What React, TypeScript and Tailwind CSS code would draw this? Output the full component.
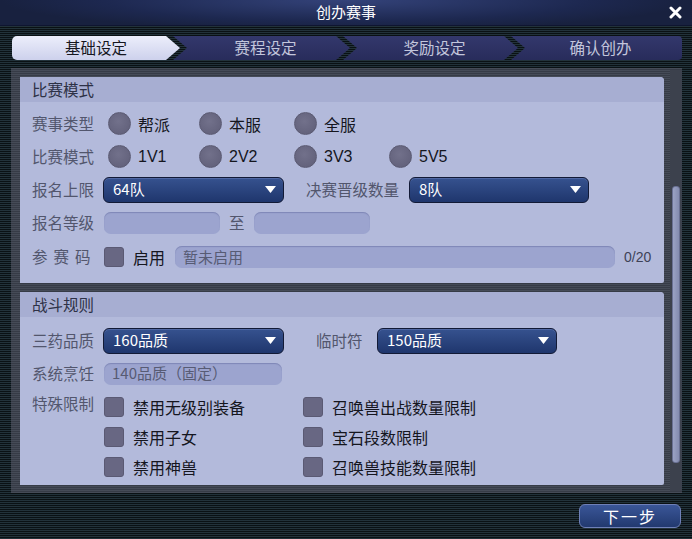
import React from "react";

const stripes =
  "bg-[image:repeating-linear-gradient(180deg,#22323a_0px,#22323a_1px,#0a1114_1px,#0a1114_2px)]";

function Tri() {
  return (
    <svg width="11" height="7" viewBox="0 0 11 7">
      <path d="M0 0h11L5.5 7z" fill="#ffffff" />
    </svg>
  );
}

function Select({ value, w }: { value: string; w: string }) {
  return (
    <div
      className={`${w} flex h-[26px] items-center justify-between rounded-[6px] border border-[#121a36] bg-[linear-gradient(180deg,#36528f,#1f366d)] pl-[9px] pr-[7px] text-[15px] text-white shadow-[inset_0_1px_0_#5068a4]`}
    >
      <span>{value}</span>
      <Tri />
    </div>
  );
}

function Field({ w, text }: { w: string; text?: string }) {
  return (
    <div
      className={`${w} flex h-[22px] items-center rounded-[7px] bg-[#9ca4cf] pl-[8px] text-[15px] text-[#575b74] shadow-[inset_0_1px_1px_#7f87b6]`}
    >
      {text}
    </div>
  );
}

function Radio({ label, w }: { label: string; w: string }) {
  return (
    <div className={`${w} flex items-center gap-[7px]`}>
      <div className="h-[23px] w-[23px] rounded-full border border-[#5b5a72] bg-[radial-gradient(circle_at_45%_40%,#72718b,#5e5d77)]" />
      <span className="text-[16px] leading-[20px] text-[#15161e]">{label}</span>
    </div>
  );
}

function Check({ label }: { label?: string }) {
  return (
    <div className="flex h-[20px] items-center gap-[9px]">
      <div className="h-[20px] w-[20px] rounded-[3px] border border-[#5a5973] bg-[#686783]" />
      {label && <span className="text-[16px] leading-[20px] text-[#15161e]">{label}</span>}
    </div>
  );
}

function Label({ children }: { children: React.ReactNode }) {
  return <div className="w-[71px] shrink-0 text-[15.5px] text-[#52566d]">{children}</div>;
}

function Section({ title, children }: { title: string; children: React.ReactNode }) {
  return (
    <div className="overflow-hidden rounded-tr-[4px] rounded-br-[2px] bg-[#b3badb]">
      <div className="flex h-[25px] items-center bg-[#a7aed2] pl-[12px] text-[15.5px] text-[#2d3146]">
        {title}
      </div>
      <div className="pl-[12px]">{children}</div>
    </div>
  );
}

const tabs = ["基础设定", "赛程设定", "奖励设定", "确认创办"];

export default function App() {
  return (
    <div
      className={`flex h-[539px] w-[692px] flex-col overflow-hidden font-['Noto_Sans_CJK_SC',sans-serif] ${stripes}`}
    >
      {/* title bar */}
      <div className="grid h-[26px] shrink-0 grid-cols-[1fr_auto_1fr] items-center border-b border-[#0f1530] bg-[radial-gradient(ellipse_50%_120%_at_50%_0%,#34437a,#1d2850_70%,#18213f)]">
        <div />
        <div className="text-[15px] text-white">创办赛事</div>
        <div className="flex justify-end pr-[10px]">
          <svg width="13" height="13" viewBox="0 0 13 13">
            <path d="M2 2l9 9M11 2l-9 9" stroke="#ffffff" strokeWidth="3" strokeLinecap="round" />
          </svg>
        </div>
      </div>

      {/* tabs */}
      <div className="mt-[10px] flex h-[24px] shrink-0 pl-[12px]">
        {tabs.map((t, i) => {
          const active = i === 0;
          const w = ["w-[168px]", "w-[177px]", "w-[175px]", "w-[171px]"][i];
          const clip =
            i === 0
              ? "[clip-path:polygon(0_0,calc(100%-14px)_0,100%_50%,calc(100%-14px)_100%,0_100%)]"
              : i === 3
                ? "[clip-path:polygon(0_0,100%_0,100%_100%,0_100%,14px_50%)]"
                : "[clip-path:polygon(0_0,calc(100%-14px)_0,100%_50%,calc(100%-14px)_100%,0_100%,14px_50%)]";
          return (
            <div
              key={t}
              className={`${w} ${clip} ${i > 0 ? "-ml-[7px]" : "rounded-l-[5px]"} ${
                i === 3 ? "rounded-r-[4px]" : ""
              } flex h-full items-center justify-center text-[15.5px] ${
                active
                  ? "bg-[linear-gradient(180deg,#eceefb,#cdd1ec)] text-[#16171f]"
                  : "bg-[linear-gradient(180deg,#33386c,#282c5b)] pl-[8px] text-[#c3c6dc]"
              }`}
            >
              {t}
            </div>
          );
        })}
      </div>

      {/* main frame */}
      <div className="ml-[11px] mt-[8px] flex h-[425px] w-[671px] shrink-0 bg-[image:repeating-linear-gradient(180deg,#454b57_0px,#454b57_1px,#363b46_1px,#363b46_2px)]">
        <div className="ml-[9px] flex w-[644px] flex-col gap-[9px] pt-[9px]">
          <Section title="比赛模式">
            <div className="flex flex-col pb-[8px] pt-[5px]">
              <div className="flex h-[33px] items-center">
                <Label>赛事类型</Label>
                <div className="ml-[5px] flex">
                  <Radio label="帮派" w="w-[91px]" />
                  <Radio label="本服" w="w-[95px]" />
                  <Radio label="全服" w="w-[95px]" />
                </div>
              </div>
              <div className="flex h-[33px] items-center">
                <Label>比赛模式</Label>
                <div className="ml-[5px] flex font-['Liberation_Sans',sans-serif]">
                  <Radio label="1V1" w="w-[91px]" />
                  <Radio label="2V2" w="w-[95px]" />
                  <Radio label="3V3" w="w-[95px]" />
                  <Radio label="5V5" w="w-[95px]" />
                </div>
              </div>
              <div className="flex h-[33px] items-center">
                <Label>报名上限</Label>
                <Select value="64队" w="w-[181px]" />
                <div className="ml-[22px] w-[103px] text-[15.5px] text-[#52566d]">决赛晋级数量</div>
                <Select value="8队" w="w-[180px]" />
              </div>
              <div className="flex h-[33px] items-center">
                <Label>报名等级</Label>
                <div className="ml-[1px] flex items-center">
                  <Field w="w-[116px]" />
                  <span className="ml-[9px] w-[25px] text-[15.5px] text-[#52566d]">至</span>
                  <Field w="w-[116px]" />
                </div>
              </div>
              <div className="flex h-[36px] items-center">
                <Label>
                  <span className="tracking-[6px]">参赛码</span>
                </Label>
                <div className="ml-[1px] flex items-center">
                  <Check label="启用" />
                  <div className="ml-[10px]">
                    <Field w="w-[440px]" text="暂未启用" />
                  </div>
                  <span className="ml-[9px] font-['Liberation_Sans',sans-serif] text-[14px] text-[#3e4257]">
                    0/20
                  </span>
                </div>
              </div>
            </div>
          </Section>

          <Section title="战斗规则">
            <div className="flex flex-col pb-[8px] pt-[7px]">
              <div className="flex h-[33px] items-center">
                <Label>三药品质</Label>
                <Select value="160品质" w="w-[181px]" />
                <div className="ml-[32px] w-[61px] text-[15.5px] text-[#52566d]">临时符</div>
                <Select value="150品质" w="w-[180px]" />
              </div>
              <div className="flex h-[33px] items-center">
                <Label>系统烹饪</Label>
                <div className="ml-[1px]">
                  <Field w="w-[178px]" text="140品质（固定）" />
                </div>
              </div>
              <div className="mt-[7px] flex items-start">
                <div className="-mt-[5px]">
                  <Label>特殊限制</Label>
                </div>
                <div className="ml-[1px] grid grid-cols-[199px_auto] gap-y-[10px]">
                  <Check label="禁用无级别装备" />
                  <Check label="召唤兽出战数量限制" />
                  <Check label="禁用子女" />
                  <Check label="宝石段数限制" />
                  <Check label="禁用神兽" />
                  <Check label="召唤兽技能数量限制" />
                </div>
              </div>
            </div>
          </Section>
        </div>

        {/* scrollbar */}
        <div className="my-[2px] ml-auto flex w-[12px] flex-col items-center bg-[#3c414d]">
          <div className="h-[116px]" />
          <div className="h-[277px] w-[8px] rounded-[3px] border border-[#6a7194] bg-[linear-gradient(90deg,#9aa2c4,#848cb0)]" />
        </div>
      </div>

      {/* footer */}
      <div className="mt-[11px] flex justify-end pr-[11px]">
        <div className="flex h-[24px] w-[102px] items-center justify-center rounded-[6px] border border-[#6f80b8] bg-[linear-gradient(180deg,#3a5698,#22396f)] text-[16px] tracking-[2px] text-white">
          下一步
        </div>
      </div>
    </div>
  );
}
